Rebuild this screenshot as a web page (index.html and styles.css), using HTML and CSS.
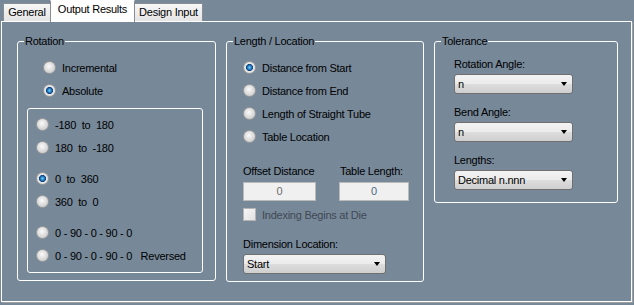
FILE: index.html
```html
<!DOCTYPE html>
<html lang="en">
<head>
    <meta charset="UTF-8">
    <title>Output Results</title>
    <link rel="stylesheet" href="styles.css">
</head>
<body>

    <div class="tabs">
        <div class="tab tab-general">General</div>
        <div class="tab tab-active">Output Results</div>
        <div class="tab tab-design">Design Input</div>
    </div>

    <div class="page">

        <!-- Rotation -->
        <fieldset class="group group-rotation">
            <legend>Rotation</legend>
            <div class="group-body">
                <label class="opt"><input type="radio" name="rot-mode"> Incremental</label>
                <label class="opt"><input type="radio" name="rot-mode" checked> Absolute</label>

                <div class="range">
                    <div class="range-set">
                        <label class="opt"><input type="radio" name="rot-range"> -180&nbsp; to&nbsp; 180</label>
                        <label class="opt"><input type="radio" name="rot-range"> 180&nbsp; to&nbsp; -180</label>
                    </div>
                    <div class="range-set">
                        <label class="opt"><input type="radio" name="rot-range" checked> 0&nbsp; to&nbsp; 360</label>
                        <label class="opt"><input type="radio" name="rot-range"> 360&nbsp; to&nbsp; 0</label>
                    </div>
                    <div class="range-set">
                        <label class="opt"><input type="radio" name="rot-range"> 0 - 90 - 0 - 90 - 0</label>
                        <label class="opt"><input type="radio" name="rot-range"> 0 - 90 - 0 - 90 - 0&nbsp;&nbsp; Reversed</label>
                    </div>
                </div>
            </div>
        </fieldset>

        <!-- Length / Location -->
        <fieldset class="group group-length">
            <legend>Length / Location</legend>
            <div class="group-body">
                <label class="opt"><input type="radio" name="len" checked> Distance from Start</label>
                <label class="opt"><input type="radio" name="len"> Distance from End</label>
                <label class="opt"><input type="radio" name="len"> Length of Straight Tube</label>
                <label class="opt"><input type="radio" name="len"> Table Location</label>

                <div class="fields">
                    <div class="field-col field-offset">
                        <span class="caption">Offset Distance</span>
                        <div class="textbox">0</div>
                    </div>
                    <div class="field-col field-table">
                        <span class="caption">Table Length:</span>
                        <div class="textbox textbox-blue">0</div>
                    </div>
                </div>

                <label class="check disabled"><span class="check-box"></span> Indexing Begins at Die</label>

                <span class="caption caption-dim">Dimension Location:</span>
                <div class="combo combo-wide">Start</div>
            </div>
        </fieldset>

        <!-- Tolerance -->
        <fieldset class="group group-tolerance">
            <legend>Tolerance</legend>
            <div class="group-body">
                <span class="caption">Rotation Angle:</span>
                <div class="combo">n</div>

                <span class="caption">Bend Angle:</span>
                <div class="combo">n</div>

                <span class="caption">Lengths:</span>
                <div class="combo">Decimal n.nnn</div>
            </div>
        </fieldset>

    </div>

</body>
</html>
```

FILE: styles.css
```css
body {
    margin: 0;
    width: 634px;
    height: 305px;
    overflow: hidden;
    background-color: #778899;
    font-family: 'Liberation Sans', Arial, sans-serif;
    font-size: 11px;
    letter-spacing: -0.25px;
    color: #000;
}

/* tab strip */

.tabs {
    display: flex;
    align-items: flex-end;
    height: 21px;
    padding-left: 3px;
}

.tab {
    box-sizing: border-box;
    height: 18px;
    padding-top: 2px;
    line-height: 13px;
    text-align: center;
    border: 1px solid #898c95;
    border-bottom: none;
    background: linear-gradient(#f7f7f7, #e4e4e4);
}

.tab-general {
    width: 48px;
}

.tab-active {
    position: relative;
    z-index: 1;
    width: 85px;
    height: 22px;
    margin-left: -1px;
    margin-bottom: -1px;
    border-top-color: #fff;
    background: #fff;
}

.tab-design {
    width: 69px;
    margin-left: -1px;
}

/* tab page */

.page {
    box-sizing: border-box;
    width: 631px;
    height: 281px;
    margin-left: 1px;
    border: 1px solid #fff;
    box-shadow: 1px 1px 0 #a0a0a0;
    display: flex;
    align-items: flex-start;
    gap: 10px;
    padding: 13px 0 0 15px;
}

.group {
    box-sizing: border-box;
    margin: 0;
    padding: 0;
    min-width: 0;
    border: 1px solid #fff;
    border-radius: 3px;
}

.group legend {
    padding: 0 1px;
    margin-left: 6px;
    line-height: 13px;
}

.group-body {
    display: flex;
    flex-direction: column;
    align-items: flex-start;
}

.group-rotation {
    width: 199px;
}

.group-rotation .group-body {
    padding: 8px 0 7px 0;
}

.group-rotation .group-body > .opt {
    margin-left: 25px;
}

.group-length {
    width: 198px;
}

.group-length .group-body {
    padding: 8px 0 7px 16px;
}

.group-tolerance {
    width: 184px;
}

.group-tolerance .group-body {
    padding: 10px 0 12px 19px;
}

/* radio options */

.opt {
    display: flex;
    align-items: center;
    height: 23px;
    white-space: nowrap;
}

.opt input {
    appearance: none;
    -webkit-appearance: none;
    box-sizing: border-box;
    width: 13px;
    height: 13px;
    margin: 0 6px 0 0;
    border: 1px solid #9c9c9c;
    border-radius: 50%;
    background: radial-gradient(circle at 45% 40%, #fbfbfb 0, #e6e6e6 3px, #d2d2d2 6px);
}

.opt input:checked {
    background: radial-gradient(circle, #7fd0fa 0, #2f8fd6 1.5px, #0d3f78 3.3px, #eaeaea 3.8px, #d8d8d8 6px);
}

.range {
    box-sizing: border-box;
    width: 176px;
    margin: 6px 0 0 9px;
    padding: 4px 0 5px 8px;
    border: 1px solid #fff;
    border-radius: 3px;
}

.range-set + .range-set {
    margin-top: 8px;
}

/* length / location fields */

.caption {
    display: block;
    line-height: 13px;
    white-space: nowrap;
}

.fields {
    display: flex;
    gap: 23px;
    margin-top: 17px;
}

.field-col .caption {
    margin-bottom: 4px;
}

.field-offset .textbox {
    width: 73px;
}

.field-table .caption {
    margin-left: 1px;
}

.field-table .textbox {
    width: 70px;
}

.textbox {
    box-sizing: border-box;
    height: 19px;
    line-height: 17px;
    text-align: center;
    border: 1px solid #b9b9b9;
    background-color: #f0f0f0;
    color: #6d6d6d;
}

.textbox-blue {
    color: #4e6781;
}

.check {
    display: flex;
    align-items: center;
    height: 13px;
    margin-top: 7px;
    white-space: nowrap;
}

.check-box {
    box-sizing: border-box;
    width: 13px;
    height: 13px;
    margin-right: 6px;
    border: 1px solid #b4b4b4;
    background: linear-gradient(135deg, #f6f6f6, #e2e2e2);
}

.disabled {
    color: #3f4954;
}

.caption-dim {
    margin-top: 17px;
}

/* combo boxes */

.caption + .combo {
    margin-top: 3px;
}

.combo + .caption {
    margin-top: 12px;
}

.combo {
    box-sizing: border-box;
    width: 119px;
    height: 20px;
    padding: 0 5px 0 3px;
    display: flex;
    align-items: center;
    justify-content: space-between;
    border: 1px solid #707070;
    border-radius: 3px;
    background: linear-gradient(#f3f3f3, #ebebeb 50%, #dddddd 50%, #cfcfcf);
}

.combo::after {
    content: "";
    border-left: 3.5px solid transparent;
    border-right: 3.5px solid transparent;
    border-top: 4px solid #000;
}

.combo-wide {
    width: 143px;
}
```
